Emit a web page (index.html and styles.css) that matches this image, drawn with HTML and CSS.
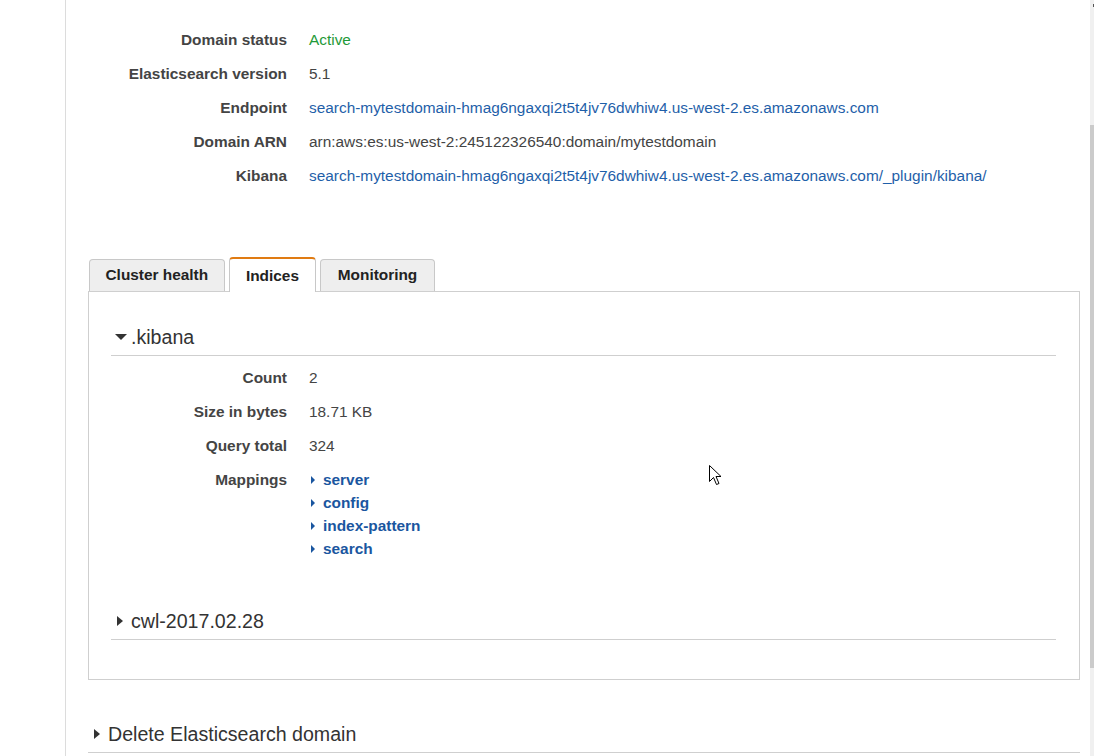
FILE: index.html
```html
<!DOCTYPE html>
<html>
<head>
<meta charset="utf-8">
<link rel="stylesheet" href="styles.css">
</head>
<body>
<div class="page">
  <dl class="summary">
    <dt>Domain status</dt><dd class="ok">Active</dd>
    <dt>Elasticsearch version</dt><dd>5.1</dd>
    <dt>Endpoint</dt><dd><a>search-mytestdomain-hmag6ngaxqi2t5t4jv76dwhiw4.us-west-2.es.amazonaws.com</a></dd>
    <dt>Domain ARN</dt><dd>arn:aws:es:us-west-2:245122326540:domain/mytestdomain</dd>
    <dt>Kibana</dt><dd><a>search-mytestdomain-hmag6ngaxqi2t5t4jv76dwhiw4.us-west-2.es.amazonaws.com/_plugin/kibana/</a></dd>
  </dl>

  <div class="tabs">
    <div class="tab">Cluster health</div>
    <div class="tab active">Indices</div>
    <div class="tab">Monitoring</div>
  </div>
  <div class="panel">
    <div class="section">
      <h3 class="sec-head"><span class="tri-down"></span>.kibana</h3>
      <dl class="details">
        <dt>Count</dt><dd>2</dd>
        <dt>Size in bytes</dt><dd>18.71 KB</dd>
        <dt>Query total</dt><dd>324</dd>
        <dt>Mappings</dt>
        <dd>
          <ul class="maps">
            <li><span class="tri-sm"></span>server</li>
            <li><span class="tri-sm"></span>config</li>
            <li><span class="tri-sm"></span>index-pattern</li>
            <li><span class="tri-sm"></span>search</li>
          </ul>
        </dd>
      </dl>
    </div>
    <div class="section second">
      <h3 class="sec-head"><span class="tri-right"></span>cwl-2017.02.28</h3>
    </div>
  </div>

  <h3 class="delete"><span class="tri-right"></span>Delete Elasticsearch domain</h3>
</div>

<div class="scrollbar"><div class="thumb"></div><div class="mark"></div></div>

<svg class="cursor" width="13" height="21" viewBox="0 0 13 21">
  <path d="M0.5 0.5 L0.5 16.5 L4.5 12.5 L7.5 19.5 L10 18.5 L7 11.5 L12 11.5 Z" fill="#fff" stroke="#000" stroke-width="1"/>
</svg>
</body>
</html>
```

FILE: styles.css
```css
html, body {
  margin: 0;
  padding: 0;
  background: #fff;
  overflow: hidden;
}
body {
  font-family: "Liberation Sans", Arial, sans-serif;
  font-size: 15.4px;
  color: #444;
  width: 1094px;
  height: 756px;
}
.page {
  margin-left: 65px;
  border-left: 1px solid #dcdcdc;
  height: 756px;
  padding: 23px 0 0 22px;
  width: 992px;
  box-sizing: content-box;
}
a { color: #1f5fa9; }
dl { margin: 0; }
.summary {
  display: grid;
  grid-template-columns: 199px 1fr;
  column-gap: 22px;
  line-height: 34px;
}
dt {
  font-weight: bold;
  text-align: right;
  color: #444;
}
dd { margin: 0; color: #444; }
.ok { color: #1f9a38; }

.tabs {
  display: flex;
  align-items: flex-end;
  gap: 4px;
  margin-top: 64px;
  padding-left: 1px;
  position: relative;
  z-index: 1;
  height: 34px;
}
.tab {
  height: 32px;
  box-sizing: border-box;
  border: 1px solid #c8c8c8;
  border-bottom: none;
  border-radius: 4px 4px 0 0;
  background: #eee;
  font-weight: bold;
  color: #222;
  line-height: 30px;
  padding: 0 15.5px;
  margin-bottom: 0;
}
.tab.active {
  height: 35px;
  background: #fff;
  border-top: 2px solid #e07b12;
  line-height: 34px;
  margin-bottom: -1px;
  padding: 0 16.3px;
}
.tab:last-child { padding: 0 16.5px; }

.panel {
  border: 1px solid #cfcfcf;
  padding: 0 23px 39px 22px;
  width: 945px;
  box-sizing: content-box;
}
.section { padding-top: 33px; }
.section.second { padding-top: 43px; }
.sec-head {
  margin: 0;
  font-weight: normal;
  font-size: 19.6px;
  line-height: 24px;
  color: #333;
  padding-bottom: 6px;
  border-bottom: 1px solid #cfcfcf;
  display: flex;
  align-items: center;
}
.tri-down {
  width: 0; height: 0;
  border-left: 6px solid transparent;
  border-right: 6px solid transparent;
  border-top: 6px solid #333;
  margin: 0 4px 0 4px;
}
.tri-right {
  width: 0; height: 0;
  border-top: 5px solid transparent;
  border-bottom: 5px solid transparent;
  border-left: 6px solid #333;
  margin: 0 8px 0 6px;
}
.details {
  display: grid;
  grid-template-columns: 176px 1fr;
  column-gap: 22px;
  margin-top: 5px;
}
.details dt, .details dd {
  padding: 8px 0;
  line-height: 18px;
}
.maps {
  list-style: none;
  margin: 0;
  padding: 0;
  display: flex;
  flex-direction: column;
  gap: 5px;
}
.maps li {
  line-height: 18px;
  font-weight: bold;
  color: #1a56a0;
  display: flex;
  align-items: center;
}
.tri-sm {
  width: 0; height: 0;
  border-top: 4px solid transparent;
  border-bottom: 4px solid transparent;
  border-left: 4px solid #1a56a0;
  margin: 0 8px 0 2px;
}

.delete {
  margin: 42px 0 0 0;
  width: 992px;
  font-weight: normal;
  font-size: 19.6px;
  line-height: 24px;
  color: #333;
  padding-bottom: 6px;
  border-bottom: 1px solid #cfcfcf;
  display: flex;
  align-items: center;
}
.delete .tri-right { margin: 0 8px 0 6px; }

.scrollbar {
  position: absolute;
  left: 1090px;
  top: 0;
  width: 4px;
  height: 756px;
  background: #f0f0f0;
}
.thumb {
  position: absolute;
  top: 125px;
  left: 0;
  width: 4px;
  height: 543px;
  background: #cbcbcb;
}
.mark {
  position: absolute;
  top: 4px;
  left: 3px;
  width: 1px;
  height: 3px;
  background: #555;
}
.cursor {
  position: absolute;
  left: 709px;
  top: 465px;
}
```
